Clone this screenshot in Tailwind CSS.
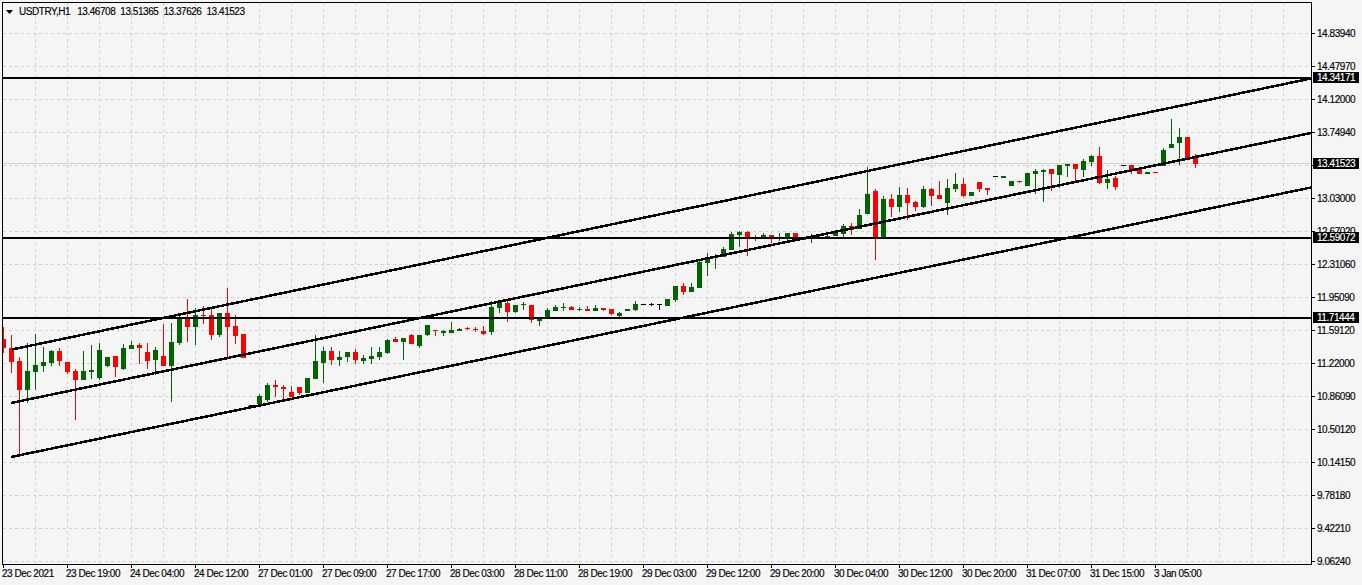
<!DOCTYPE html>
<html lang="en">
<head>
    <meta charset="UTF-8">
    <title>USDTRY,H1</title>
    <script src="https://cdn.jsdelivr.net/npm/@tailwindcss/browser@4"></script>
</head>
<body class="bg-[#f5f5f5] overflow-hidden">
    <div class="relative w-[1362px] h-[585px] pt-[2px] pl-[2px] text-[10px] leading-none tracking-[-0.45px] [-webkit-text-stroke:0.15px] text-black font-['Liberation_Sans',sans-serif]">
        <div class="flex h-[563px]">
            <!-- chart -->
            <div class="relative w-[1310px] h-[563px] border border-black shrink-0">
                <svg id="chart" class="block" width="1308" height="561" viewBox="3 3 1308 561" xmlns="http://www.w3.org/2000/svg"></svg>
                <div class="absolute left-[3px] top-[3px] flex items-center gap-[5px] h-[11px]">
                    <svg width="7" height="4" viewBox="0 0 7 4" class="mr-[1px]"><path d="M0 0h7L3.5 4z" fill="#000"/></svg>
                    <span class="mr-[2px]">USDTRY,H1</span>
                    <span>13.46708</span><span>13.51365</span><span>13.37626</span><span>13.41523</span>
                </div>
            </div>

            <!-- price axis -->
            <div class="flex flex-col pt-[15px]">
                <div class="flex items-center h-[33px] gap-[2px] shrink-0"><i class="w-[3px] h-px bg-black"></i>14.83940</div>
                <div class="flex items-center h-[33px] gap-[2px] shrink-0"><i class="w-[3px] h-px bg-black"></i>14.47970</div>
                <div class="flex items-center h-[33px] gap-[2px] shrink-0"><i class="w-[3px] h-px bg-black"></i>14.12000</div>
                <div class="flex items-center h-[33px] gap-[2px] shrink-0"><i class="w-[3px] h-px bg-black"></i>13.74940</div>
                <div class="flex items-center h-[33px] gap-[2px] shrink-0"><i class="w-[3px] h-px bg-black"></i></div>
                <div class="flex items-center h-[33px] gap-[2px] shrink-0"><i class="w-[3px] h-px bg-black"></i>13.03000</div>
                <div class="flex items-center h-[33px] gap-[2px] shrink-0"><i class="w-[3px] h-px bg-black"></i>12.67020</div>
                <div class="flex items-center h-[33px] gap-[2px] shrink-0"><i class="w-[3px] h-px bg-black"></i>12.31060</div>
                <div class="flex items-center h-[33px] gap-[2px] shrink-0"><i class="w-[3px] h-px bg-black"></i>11.95090</div>
                <div class="flex items-center h-[33px] gap-[2px] shrink-0"><i class="w-[3px] h-px bg-black"></i>11.59120</div>
                <div class="flex items-center h-[33px] gap-[2px] shrink-0"><i class="w-[3px] h-px bg-black"></i>11.22000</div>
                <div class="flex items-center h-[33px] gap-[2px] shrink-0"><i class="w-[3px] h-px bg-black"></i>10.86090</div>
                <div class="flex items-center h-[33px] gap-[2px] shrink-0"><i class="w-[3px] h-px bg-black"></i>10.50120</div>
                <div class="flex items-center h-[33px] gap-[2px] shrink-0"><i class="w-[3px] h-px bg-black"></i>10.14150</div>
                <div class="flex items-center h-[33px] gap-[2px] shrink-0"><i class="w-[3px] h-px bg-black"></i>9.78180</div>
                <div class="flex items-center h-[33px] gap-[2px] shrink-0"><i class="w-[3px] h-px bg-black"></i>9.42210</div>
                <div class="flex items-center h-[33px] gap-[2px] shrink-0"><i class="w-[3px] h-px bg-black"></i>9.06240</div>
            </div>
        </div>

        <!-- price tags over the axis -->
        <div class="absolute left-[1313px] top-[72px] w-[46px] h-[11px] pl-[4px] flex items-center bg-black text-white">14.34171</div>
        <div class="absolute left-[1313px] top-[158px] w-[46px] h-[11px] pl-[4px] flex items-center bg-black text-white">13.41523</div>
        <div class="absolute left-[1313px] top-[232px] w-[46px] h-[11px] pl-[4px] flex items-center bg-black text-white">12.59072</div>
        <div class="absolute left-[1313px] top-[312px] w-[46px] h-[11px] pl-[4px] flex items-center bg-black text-white">11.71444</div>

        <!-- time axis -->
        <div class="flex">
            <div class="w-[64px] shrink-0"><i class="block w-px h-[3px] ml-px bg-black"></i><span class="block mt-[1px]">23 Dec 2021</span></div>
            <div class="w-[64px] shrink-0"><i class="block w-px h-[3px] ml-px bg-black"></i><span class="block mt-[1px]">23 Dec 19:00</span></div>
            <div class="w-[64px] shrink-0"><i class="block w-px h-[3px] ml-px bg-black"></i><span class="block mt-[1px]">24 Dec 04:00</span></div>
            <div class="w-[64px] shrink-0"><i class="block w-px h-[3px] ml-px bg-black"></i><span class="block mt-[1px]">24 Dec 12:00</span></div>
            <div class="w-[64px] shrink-0"><i class="block w-px h-[3px] ml-px bg-black"></i><span class="block mt-[1px]">27 Dec 01:00</span></div>
            <div class="w-[64px] shrink-0"><i class="block w-px h-[3px] ml-px bg-black"></i><span class="block mt-[1px]">27 Dec 09:00</span></div>
            <div class="w-[64px] shrink-0"><i class="block w-px h-[3px] ml-px bg-black"></i><span class="block mt-[1px]">27 Dec 17:00</span></div>
            <div class="w-[64px] shrink-0"><i class="block w-px h-[3px] ml-px bg-black"></i><span class="block mt-[1px]">28 Dec 03:00</span></div>
            <div class="w-[64px] shrink-0"><i class="block w-px h-[3px] ml-px bg-black"></i><span class="block mt-[1px]">28 Dec 11:00</span></div>
            <div class="w-[64px] shrink-0"><i class="block w-px h-[3px] ml-px bg-black"></i><span class="block mt-[1px]">28 Dec 19:00</span></div>
            <div class="w-[64px] shrink-0"><i class="block w-px h-[3px] ml-px bg-black"></i><span class="block mt-[1px]">29 Dec 03:00</span></div>
            <div class="w-[64px] shrink-0"><i class="block w-px h-[3px] ml-px bg-black"></i><span class="block mt-[1px]">29 Dec 12:00</span></div>
            <div class="w-[64px] shrink-0"><i class="block w-px h-[3px] ml-px bg-black"></i><span class="block mt-[1px]">29 Dec 20:00</span></div>
            <div class="w-[64px] shrink-0"><i class="block w-px h-[3px] ml-px bg-black"></i><span class="block mt-[1px]">30 Dec 04:00</span></div>
            <div class="w-[64px] shrink-0"><i class="block w-px h-[3px] ml-px bg-black"></i><span class="block mt-[1px]">30 Dec 12:00</span></div>
            <div class="w-[64px] shrink-0"><i class="block w-px h-[3px] ml-px bg-black"></i><span class="block mt-[1px]">30 Dec 20:00</span></div>
            <div class="w-[64px] shrink-0"><i class="block w-px h-[3px] ml-px bg-black"></i><span class="block mt-[1px]">31 Dec 07:00</span></div>
            <div class="w-[64px] shrink-0"><i class="block w-px h-[3px] ml-px bg-black"></i><span class="block mt-[1px]">31 Dec 15:00</span></div>
            <div class="w-[64px] shrink-0"><i class="block w-px h-[3px] ml-px bg-black"></i><span class="block mt-[1px]">3 Jan 05:00</span></div>
        </div>
    </div>

    <script>
        const svg = document.getElementById('chart');

        function add(tag, attrs) {
            const el = document.createElementNS('http://www.w3.org/2000/svg', tag);
            for (const k in attrs) el.setAttribute(k, attrs[k]);
            svg.appendChild(el);
        }

        // grid
        const dash = { stroke: '#d2d2d2', 'stroke-width': 1, 'stroke-dasharray': '3 3', 'shape-rendering': 'crispEdges' };
        for (let x = 35.5; x < 1311; x += 32) add('line', { x1: x, y1: 3, x2: x, y2: 564, ...dash });
        for (let y = 33.5; y < 564; y += 33) add('line', { x1: 3, y1: y, x2: 1311, y2: y, ...dash });

        // bid line
        add('line', { x1: 3, y1: 163.5, x2: 1311, y2: 163.5, stroke: '#d2d2d2', 'shape-rendering': 'crispEdges' });

        // bars in page pixels: colour, wick top, wick bottom, body top, body bottom (k = position in the array)
        const G = '#006400', R = '#ff0000', B = '#000000';
        const bars = [
            [R,327,353,339,348],[R,335,373,348,362],[R,357,457,361,390],[G,343,403,371,390],[G,334,390,365,372],
            [G,347,372,362,366],[G,350,366,351,363],[R,348,366,351,361],[R,362,374,362,372],[R,369,420,371,380],
            [G,351,380,371,380],[G,345,379,370,372],[G,343,380,350,378],[G,357,367,357,366],[R,356,377,356,367],
            [G,344,370,348,369],[G,341,349,345,349],[R,343,364,345,348],[R,343,369,352,361],[G,347,375,350,360],
            [R,324,366,356,366],[G,323,402,342,366],[G,315,345,319,343],[R,299,342,319,327],[G,308,345,315,327],
            [R,306,324,315,316],[R,308,340,315,335],[G,313,337,313,335],[R,288,359,313,327],[R,315,344,326,336],
            [R,334,358,334,358],[B,405,406,405,406],[G,394,404,396,404],[G,383,402,385,400],[R,380,397,385,387],
            [R,385,401,387,389],[R,386,397,392,397],[R,387,395,387,393],[G,378,393,378,393],[G,335,379,361,379],
            [G,347,383,351,363],[R,347,365,351,360],[G,351,366,357,360],[G,352,362,352,357],[R,349,364,352,360],
            [G,355,364,358,361],[G,347,364,356,359],[G,347,360,352,357],[G,339,354,340,353],[R,337,342,339,342],
            [G,338,360,338,342],[R,334,344,335,344],[G,335,348,335,346],[G,325,336,325,335],[R,330,336,330,331],
            [G,330,336,331,333],[G,322,333,330,333],[G,328,331,329,331],[R,327,330,328,329],[R,327,332,329,330],
            [R,326,335,331,334],[G,301,335,307,332],[G,301,313,302,308],[R,301,322,303,312],[G,305,313,305,312],
            [G,302,310,304,305],[R,305,323,305,320],[G,317,326,317,321],[G,308,319,310,318],[G,305,311,307,311],
            [G,303,311,307,308],[R,306,310,307,310],[G,307,311,309,310],[R,306,311,309,311],[G,305,311,308,311],
            [R,308,311,308,310],[R,309,315,309,314],[G,312,317,313,316],[G,309,311,309,311],[G,301,311,304,310],
            [B,304,305,304,305],[B,303,306,304,305],[B,304,310,304,305],[G,299,306,299,306],[G,286,302,286,300],
            [R,283,295,286,292],[G,283,292,287,292],[G,261,288,262,288],[G,253,276,257,263],[G,254,269,256,258],
            [G,247,257,249,257],[G,232,250,234,250],[G,231,247,232,235],[R,231,256,232,238],[R,235,241,237,238],
            [G,233,239,235,238],[R,235,243,235,239],[G,233,241,238,239],[G,233,241,233,238],[R,233,241,233,238],
            [R,238,240,238,240],[G,234,243,237,239],[R,235,239,237,238],[G,233,238,236,238],[G,230,236,232,236],
            [G,224,238,226,234],[R,223,235,226,230],[G,209,229,215,229],[G,167,214,194,214],[R,189,260,191,239],
            [G,196,239,199,239],[R,194,217,199,207],[G,187,212,195,207],[R,188,220,195,203],[R,201,211,202,207],
            [G,186,208,189,207],[R,188,206,189,196],[R,181,199,195,199],[G,179,215,188,203],[G,173,192,184,189],
            [R,178,197,184,196],[G,192,196,192,196],[R,182,192,182,189],[R,188,195,188,190],[B,176,177,176,177],
            [G,176,178,176,178],[G,181,186,181,186],[R,181,183,181,182],[G,173,186,173,186],[G,169,194,171,174],
            [G,169,202,170,172],[R,169,191,169,174],[G,165,188,165,175],[G,164,177,164,166],[R,164,182,164,169],
            [G,159,177,161,170],[G,155,166,156,162],[R,147,184,156,183],[G,170,189,179,183],[R,176,190,178,187],
            [B,165,166,165,166],[R,165,174,165,171],[R,169,174,169,174],[G,172,174,172,174],[R,172,173,172,173],
            [G,148,166,150,166],[G,119,148,144,148],[G,128,165,137,143],[R,137,160,137,160],[R,154,168,158,164]
        ];
        bars.forEach((b, k) => {
            const [c, wt, wb, bt, bb] = b;
            add('rect', { x: 3 + 8 * k, y: wt, width: 1, height: wb - wt, fill: c, 'shape-rendering': 'crispEdges' });
            add('rect', { x: 1 + 8 * k, y: bt, width: 5, height: bb - bt, fill: c, 'shape-rendering': 'crispEdges' });
        });

        // horizontal levels and channel lines
        const line = { stroke: '#000', 'stroke-width': 2, 'shape-rendering': 'crispEdges' };
        [78, 238, 318].forEach(y => add('line', { x1: 3, y1: y, x2: 1311, y2: y, ...line }));
        const slant = { ...line, 'stroke-width': 2.5 };
        add('line', { x1: 12, y1: 349.5, x2: 1311, y2: 78.5, ...slant });
        add('line', { x1: 11, y1: 403, x2: 1311, y2: 133, ...slant });
        add('line', { x1: 11, y1: 457, x2: 1311, y2: 187.5, ...slant });
    </script>
</body>
</html>
